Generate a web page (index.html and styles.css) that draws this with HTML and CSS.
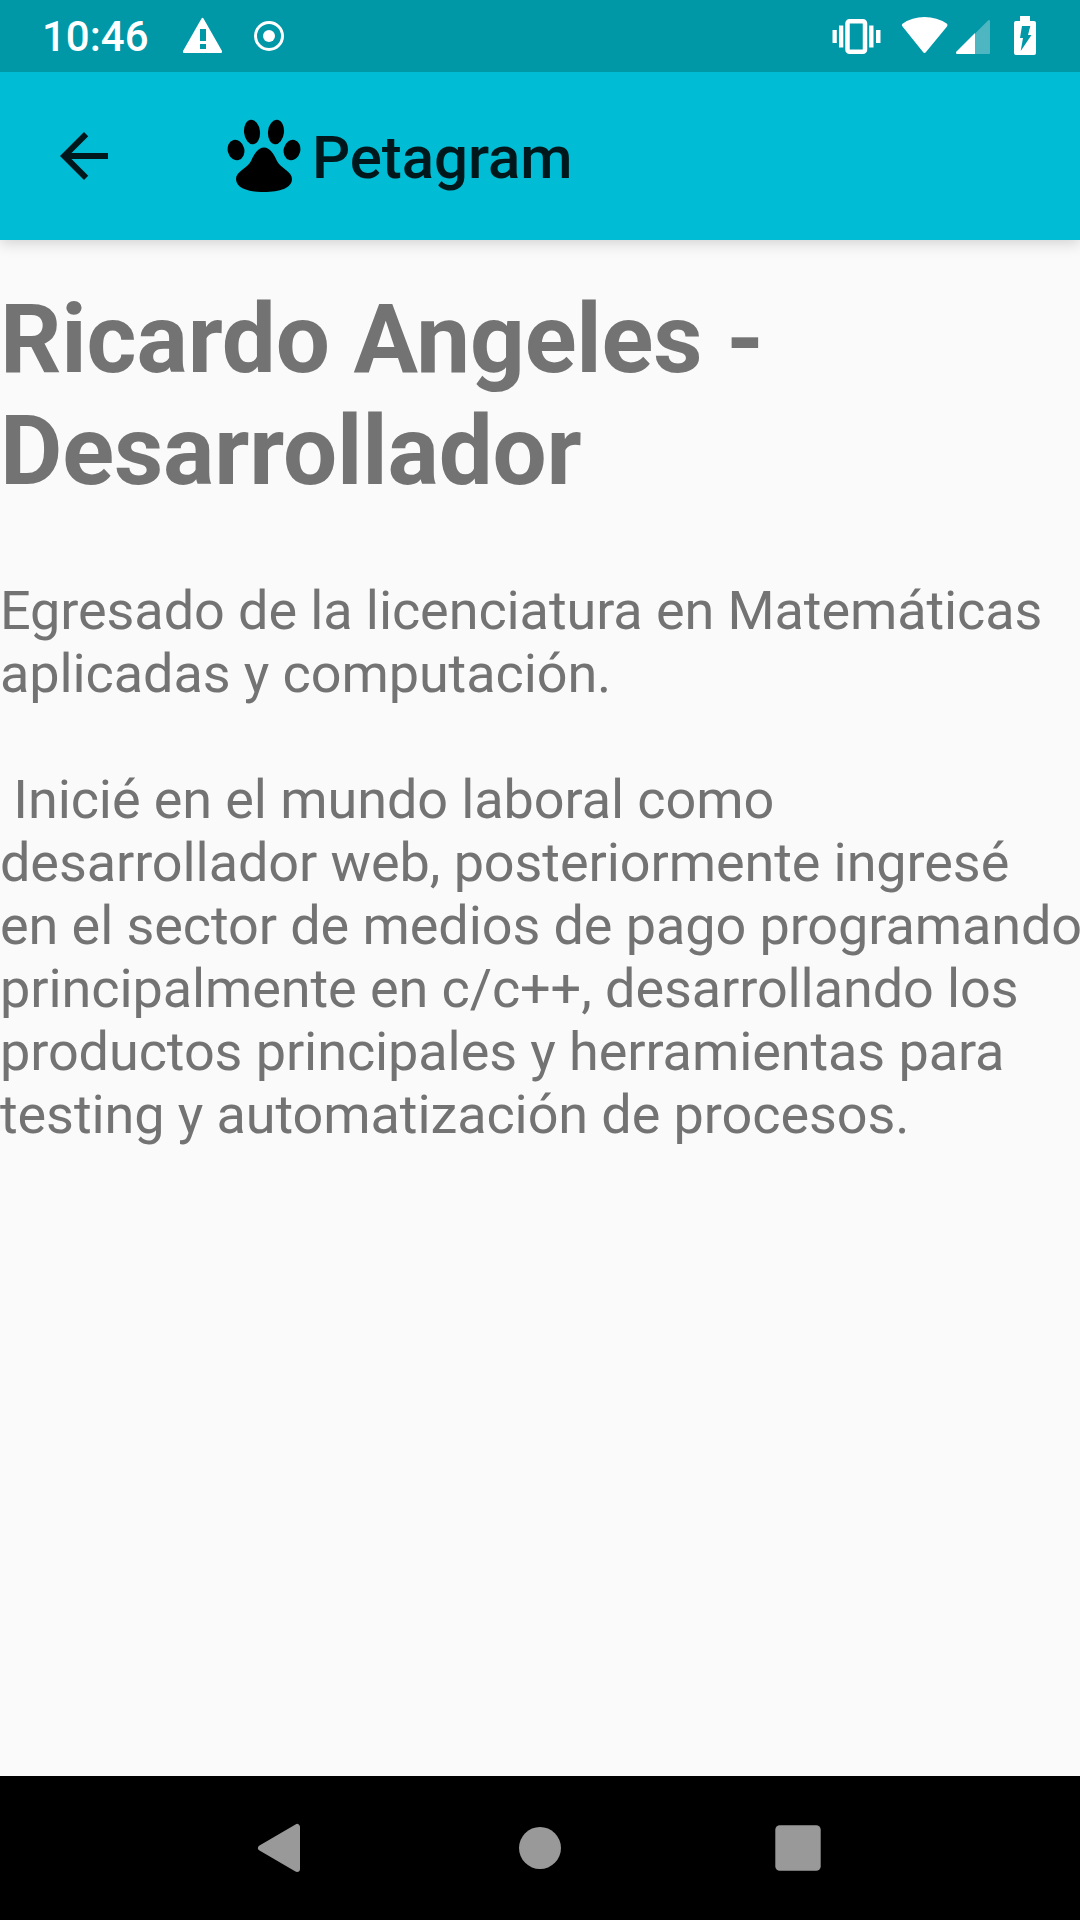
FILE: index.html
```html
<!DOCTYPE html>
<html lang="es">
<head>
<meta charset="utf-8">
<title>Petagram</title>
<link rel="stylesheet" href="styles.css">
</head>
<body>
<header class="status">
  <span class="clock">10:46</span>
  <svg class="status-left" width="110" height="72" viewBox="0 0 110 72">
    <path fill="#fff" fill-rule="evenodd" d="M21.5 18.5Q22.5 17 23.5 18.5L42 51Q42.500 53 41 53H4Q2.500 53 3 51ZM20 29v12h6V29ZM20 44v5h6v-5Z"/>
    <circle cx="89" cy="36" r="13.5" fill="none" stroke="#fff" stroke-width="3"/>
    <circle cx="89" cy="36" r="6" fill="#fff"/>
  </svg>
  <svg class="status-right" width="210" height="72" viewBox="0 0 210 72">
    <path fill="#fff" d="M.5 30h4.300v13H.5ZM7 25.500h4.300v22H7ZM37.200 25.500h4.300v22h-4.300ZM44 30h4.500v13H44Z"/>
    <rect x="15.500" y="21.200" width="17.500" height="30.500" rx="2" fill="none" stroke="#fff" stroke-width="4.500"/>
    <path fill="#fff" d="M70.500 26.500Q69 25 70.500 23.700Q80 17 92.500 17T115 23.700Q116 25 115 26.500L94 52Q92.500 54 91 52Z"/>
    <path fill="#fff" opacity=".3" d="M143 33.500V54H157Q158 54 158 53V21Q157.500 19 155.500 21Z"/>
    <path fill="#fff" d="M143 33V54H125.500Q123 54 124.500 51.500Z"/>
    <path fill="#fff" fill-rule="evenodd" d="M188 16h10v5h4q2 0 2 2v30q0 2-2 2h-18q-2 0-2-2V23q0-2 2-2h4ZM190 26l-2 12h3l-2.300 13 10.800-16H196l2.300-9Z"/>
  </svg>
</header>
<div class="toolbar">
  <svg class="back" width="48" height="48" viewBox="4 4 16 16"><path d="M20 11H7.830l5.590-5.590L12 4l-8 8 8 8 1.410-1.410L7.830 13H20v-2z"/></svg>
  <svg class="paw" width="74" height="74" viewBox="0 0 74 74">
    <ellipse cx="25" cy="13" rx="8" ry="12.300" transform="rotate(-6 25 13)"/><ellipse cx="49" cy="13" rx="8" ry="12.300" transform="rotate(6 49 13)"/>
    <ellipse cx="9" cy="31" rx="8.300" ry="10.300" transform="rotate(-14 9 31)"/><ellipse cx="65" cy="31" rx="8.300" ry="10.300" transform="rotate(14 65 31)"/>
    <path d="M37 28.500C43 28.500 47 35 50 42C54 50 65 52 65 60C65 69 53 73 37 73S9 69 9 60C9 52 20 50 24 42C27 35 31 28.500 37 28.500Z"/>
  </svg>
  <h1 class="app-name">Petagram</h1>
</div>
<main class="content">
  <h2 class="name">Ricardo Angeles -<br>Desarrollador</h2>
  <p class="bio">Egresado de la licenciatura en Matemáticas
aplicadas y computación.

 Inicié en el mundo laboral como
desarrollador web, posteriormente ingresé
en el sector de medios de pago programando
principalmente en c/c++, desarrollando los
productos principales y herramientas para
testing y automatización de procesos.</p>
</main>
<nav class="navbar">
  <svg width="44" height="50" viewBox="0 0 44 50"><path fill="#999" d="M40 4V46L4 25Z" stroke="#999" stroke-width="6" stroke-linejoin="round"/></svg>
  <svg width="44" height="44" viewBox="0 0 44 44"><circle cx="22" cy="22" r="21" fill="#999"/></svg>
  <svg class="recents" width="46" height="46" viewBox="0 0 46 46"><rect x=".3" y=".3" width="45.400" height="45.400" rx="4.500" fill="#999"/></svg>
</nav>
</body>
</html>
```
FILE: styles.css
```css
body { margin: 0; width: 1080px; height: 1920px; display: flex; flex-direction: column; overflow: hidden; background: #fafafa; font-family: Roboto, sans-serif; }
svg { display: block; flex: none; }
.status { height: 72px; flex: none; display: flex; align-items: center; background: #0097a7; color: #fff; }
.clock { width: 138px; padding-left: 42px; font-size: 42px; font-weight: 500; line-height: 72px; position: relative; top: 1px; }
.status-right { margin-left: auto; margin-right: 38px; }
.toolbar { height: 168px; flex: none; display: flex; align-items: center; background: #00bcd4; box-shadow: 0 3px 14px rgba(0,0,0,.17); clip-path: inset(0 0 -24px 0); }
.back { margin-left: 60px; fill: rgba(0,0,0,.87); }
.paw { margin-left: 119px; filter: blur(.7px); }
.app-name { margin: 4px 0 0 11px; font-size: 60px; font-weight: 500; line-height: 70px; letter-spacing: -.1px; color: rgba(0,0,0,.87); }
.content { flex: 1; color: #737373; }
.name { margin: 43px 0 0; font-size: 96px; line-height: 112px; font-weight: 700; letter-spacing: -.15px; }
.bio { margin: 72px 0 0; font-size: 54px; line-height: 63px; letter-spacing: -.09px; white-space: pre; }
.navbar { height: 144px; flex: none; display: flex; align-items: center; background: #000; padding-left: 257px; gap: 217px; }
.recents { margin-left: -4px; }
```
